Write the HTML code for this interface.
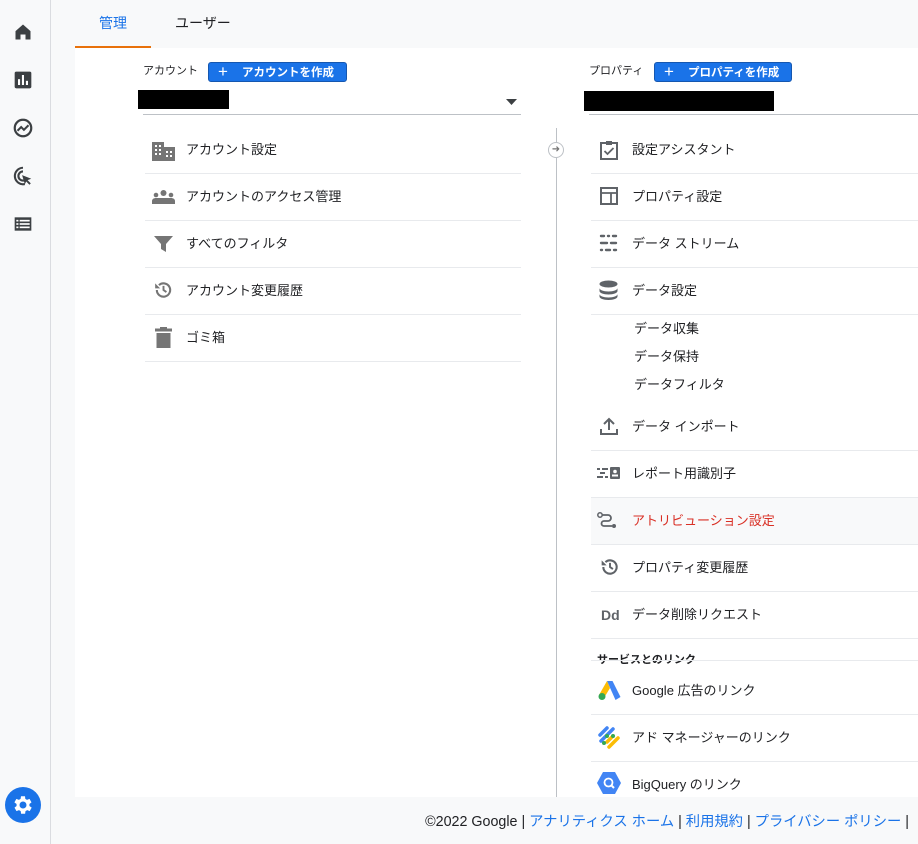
<!DOCTYPE html>
<html><head><meta charset="utf-8"><style>
*{margin:0;padding:0;box-sizing:border-box}
body{width:918px;height:844px;overflow:hidden;background:#f8f9fa;font-family:"Liberation Sans","Noto Sans CJK JP",sans-serif;color:#202124;position:relative}
.abs{position:absolute}
.side{left:0;top:0;width:51px;height:844px;border-right:1px solid #dadce0;background:#f8f9fa}
.main{left:75px;top:48px;width:843px;height:749px;background:#fff}
.t{position:absolute;font-size:13px;white-space:nowrap;line-height:16px}
.sep{position:absolute;height:1px;background:#e8eaed}
.btn{position:absolute;height:20px;background:#1a73e8;border-radius:3px;color:#fff;font-size:11.5px;font-weight:bold;line-height:20px;border:1px solid #1557b0}
.ic{position:absolute}
.r{margin-top:1px}
</style></head><body>
<div class="abs side"></div>
<svg class="ic" style="left:13px;top:22px" width="20" height="20" viewBox="0 0 24 24"><path d="M3 11 12 3l9 8v10h-6v-6H9v6H3z" fill="#3c4043"/></svg>
<svg class="ic" style="left:13px;top:70px" width="20" height="20" viewBox="0 0 24 24"><rect x="2" y="2" width="20" height="20" rx="2" fill="#3c4043"/><rect x="6" y="11" width="2.5" height="7" fill="#fff"/><rect x="10.7" y="6" width="2.5" height="12" fill="#fff"/><rect x="15.5" y="13" width="2.5" height="5" fill="#fff"/></svg>
<svg class="ic" style="left:12px;top:117px" width="22" height="22" viewBox="0 0 24 24"><circle cx="12" cy="12" r="9" fill="none" stroke="#3c4043" stroke-width="2.4"/><path d="M6 15l4-4 3 3 5-5" fill="none" stroke="#3c4043" stroke-width="2.2"/></svg>
<svg class="ic" style="left:12px;top:165px" width="22" height="22" viewBox="0 0 24 24"><path d="M12 3a9 9 0 1 0 2 17.8M12 7a5 5 0 1 0 1 9.9" fill="none" stroke="#3c4043" stroke-width="2.3"/><path d="M11 11l10 4-4 1.5 3.5 3.5-1.5 1.5-3.5-3.5L14 21z" fill="#3c4043"/></svg>
<svg class="ic" style="left:13px;top:214px" width="20" height="20" viewBox="0 0 24 24"><rect x="2" y="4" width="20" height="16" fill="#3c4043"/><g fill="#fff"><rect x="4" y="7" width="2.5" height="2"/><rect x="8" y="7" width="12" height="2"/><rect x="4" y="11" width="2.5" height="2"/><rect x="8" y="11" width="12" height="2"/><rect x="4" y="15" width="2.5" height="2"/><rect x="8" y="15" width="12" height="2"/></g></svg>
<svg class="ic" style="left:5px;top:787px" width="36" height="36" viewBox="0 0 36 36"><circle cx="18" cy="18" r="18" fill="#1a73e8"/><g transform="translate(6 6)"><path fill="#fff" d="M19.4 13a7.5 7.5 0 0 0 0-2l2.1-1.6-2-3.5-2.5 1a7.3 7.3 0 0 0-1.7-1L15 3.2h-4l-.4 2.7a7.3 7.3 0 0 0-1.7 1l-2.5-1-2 3.5L6.6 11a7.5 7.5 0 0 0 0 2l-2.1 1.6 2 3.5 2.5-1c.5.4 1.1.7 1.7 1l.4 2.7h4l.4-2.7c.6-.3 1.2-.6 1.7-1l2.5 1 2-3.5zM13 15.5a3.5 3.5 0 1 1 0-7 3.5 3.5 0 0 1 0 7z" transform="translate(-1 0)"/></g></svg>

<div class="t" style="left:99px;top:15px;font-size:14px;color:#1a73e8">管理</div>
<div class="t" style="left:175px;top:15px;font-size:14px;color:#202124">ユーザー</div>
<div class="abs" style="left:75px;top:46px;width:76px;height:2px;background:#e8710a"></div>

<div class="abs main"></div>

<div class="t" style="left:143px;top:63px;font-size:11px">アカウント</div>
<div class="btn" style="left:208px;top:62px;width:139px"><span style="font-size:17px;font-weight:normal;position:absolute;left:9px;top:-1px">+</span><span style="position:absolute;left:33px">アカウントを作成</span></div>
<div class="abs" style="left:138px;top:90px;width:91px;height:19px;background:#000"></div>
<svg class="ic" style="left:506px;top:99px" width="11" height="6"><path d="M0 0h11L5.5 6z" fill="#3c4043"/></svg>
<div class="abs" style="left:143px;top:114px;width:378px;height:1px;background:#bdc1c6"></div>

<svg class="ic" style="left:152px;top:142px" width="23" height="19" viewBox="0 0 23 19"><path d="M0 0h12v5h11v14H0z" fill="#757575"/><g fill="#fff"><rect x="3" y="3" width="2" height="2"/><rect x="7" y="3" width="2" height="2"/><rect x="3" y="7" width="2" height="2"/><rect x="7" y="7" width="2" height="2"/><rect x="3" y="11" width="2" height="2"/><rect x="7" y="11" width="2" height="2"/><rect x="14" y="9" width="2" height="2"/><rect x="18" y="9" width="2" height="2"/><rect x="14" y="13" width="2" height="2"/><rect x="18" y="13" width="2" height="2"/></g></svg>
<div class="t" style="left:186px;top:142px">アカウント設定</div>
<div class="sep" style="left:145px;top:173px;width:376px"></div>
<svg class="ic" style="left:152px;top:190px" width="23" height="14" viewBox="0 0 23 14"><circle cx="11.5" cy="3" r="3" fill="#757575"/><circle cx="4" cy="5" r="2.3" fill="#757575"/><circle cx="19" cy="5" r="2.3" fill="#757575"/><path d="M0 14v-3c0-2 2-3 4-3h15c2 0 4 1 4 3v3z" fill="#757575"/></svg>
<div class="t" style="left:186px;top:189px">アカウントのアクセス管理</div>
<div class="sep" style="left:145px;top:220px;width:376px"></div>
<svg class="ic" style="left:154px;top:236px" width="19" height="16" viewBox="0 0 19 16"><path d="M0 0h19l-7 8v8l-5-3V8z" fill="#757575"/></svg>
<div class="t" style="left:186px;top:236px">すべてのフィルタ</div>
<div class="sep" style="left:145px;top:267px;width:376px"></div>
<svg class="ic" style="left:153px;top:280px" width="21" height="20" viewBox="0 0 24 24"><path d="M4 12a8 8 0 1 0 2.5-5.8" fill="none" stroke="#757575" stroke-width="2.5"/><path d="M2 4v6h6z" fill="#757575"/><path d="M12 7v5l3.5 2.5" fill="none" stroke="#757575" stroke-width="2.3"/></svg>
<div class="t" style="left:186px;top:283px">アカウント変更履歴</div>
<div class="sep" style="left:145px;top:314px;width:376px"></div>
<svg class="ic" style="left:155px;top:327px" width="17" height="21" viewBox="0 0 17 21"><rect x="0" y="1.5" width="17" height="3" fill="#757575"/><rect x="5" y="0" width="7" height="2" fill="#757575"/><rect x="1.5" y="6" width="14" height="15" fill="#757575"/></svg>
<div class="t" style="left:186px;top:330px">ゴミ箱</div>
<div class="sep" style="left:145px;top:361px;width:376px"></div>

<div class="abs" style="left:556px;top:128px;width:1px;height:669px;background:#bdc1c6"></div>
<div class="abs" style="left:548px;top:142px;width:16px;height:16px;border-radius:50%;border:1px solid #bdc1c6;background:#fff;font-size:10px;color:#757575;text-align:center;line-height:14px">➜</div>

<div class="t" style="left:589px;top:63px;font-size:11px">プロパティ</div>
<div class="btn" style="left:654px;top:62px;width:138px"><span style="font-size:17px;font-weight:normal;position:absolute;left:9px;top:-1px">+</span><span style="position:absolute;left:33px">プロパティを作成</span></div>
<div class="abs" style="left:584px;top:91px;width:190px;height:20px;background:#000"></div>
<div class="abs" style="left:589px;top:114px;width:329px;height:1px;background:#bdc1c6"></div>

<svg class="ic" style="left:600px;top:140px" width="18" height="20" viewBox="0 0 18 20"><rect x="1" y="3" width="16" height="16" fill="none" stroke="#5f6368" stroke-width="2"/><rect x="6" y="1" width="6" height="4" fill="#5f6368"/><path d="M4.5 11l3 3 6-6" fill="none" stroke="#5f6368" stroke-width="1.8"/></svg>
<div class="t" style="left:632px;top:142px">設定アシスタント</div>
<div class="sep" style="left:591px;top:173px;width:327px"></div>
<svg class="ic" style="left:600px;top:187px" width="18" height="18" viewBox="0 0 18 18"><rect x="1" y="1" width="16" height="16" fill="none" stroke="#5f6368" stroke-width="2"/><path d="M1 6h16M11 6v11" stroke="#5f6368" stroke-width="1.8"/></svg>
<div class="t" style="left:632px;top:189px">プロパティ設定</div>
<div class="sep" style="left:591px;top:220px;width:327px"></div>
<svg class="ic" style="left:599px;top:234px" width="19" height="18" viewBox="0 0 19 18"><g stroke="#5f6368" stroke-width="2.4" stroke-linecap="round"><path d="M2 2h3M9 2h1M14 2h3M2 9h6M12 9h5M2 16h1M7 16h4M15 16h2"/></g></svg>
<div class="t" style="left:632px;top:236px">データ ストリーム</div>
<div class="sep" style="left:591px;top:267px;width:327px"></div>
<svg class="ic" style="left:599px;top:280px" width="19" height="20" viewBox="0 0 19 20"><ellipse cx="9.5" cy="4" rx="9" ry="3.5" fill="#5f6368"/><path d="M0.5 8c0 2 4 3.5 9 3.5s9-1.5 9-3.5v3c0 2-4 3.5-9 3.5s-9-1.5-9-3.5z" fill="#5f6368"/><path d="M0.5 14c0 2 4 3.5 9 3.5s9-1.5 9-3.5v2.5c0 2-4 3.5-9 3.5s-9-1.5-9-3.5z" fill="#5f6368"/></svg>
<div class="t" style="left:632px;top:283px">データ設定</div>
<div class="sep" style="left:591px;top:314px;width:327px"></div>
<div class="t" style="left:634px;top:321px">データ収集</div>
<div class="t" style="left:634px;top:349px">データ保持</div>
<div class="t" style="left:634px;top:377px">データフィルタ</div>
<svg class="ic" style="left:600px;top:417px" width="18" height="18" viewBox="0 0 18 18"><path d="M9 13V2M4 7l5-5 5 5" fill="none" stroke="#5f6368" stroke-width="2"/><path d="M1 12v5h16v-5" fill="none" stroke="#5f6368" stroke-width="2"/></svg>
<div class="t" style="left:632px;top:419px">データ インポート</div>
<div class="sep" style="left:591px;top:450px;width:327px"></div>
<svg class="ic" style="left:597px;top:466px" width="23" height="14" viewBox="0 0 23 14"><g fill="#5f6368"><rect x="0" y="2" width="3" height="2"/><rect x="5" y="2" width="6" height="2"/><rect x="0" y="10" width="6" height="2"/><rect x="8" y="10" width="3" height="2"/><rect x="3" y="6" width="5" height="2"/><rect x="13" y="1" width="10" height="12" rx="1"/></g><circle cx="18" cy="5.5" r="1.8" fill="#fff"/><rect x="15" y="8.5" width="6" height="2" fill="#fff"/></svg>
<div class="t" style="left:632px;top:466px">レポート用識別子</div>
<div class="abs" style="left:591px;top:497px;width:327px;height:47px;background:#f8f9fa;border-top:1px solid #e8eaed"></div>
<svg class="ic" style="left:597px;top:512px" width="20" height="17" viewBox="0 0 20 17"><circle cx="3" cy="3" r="2.2" fill="none" stroke="#5f6368" stroke-width="1.5"/><circle cx="17" cy="14" r="2" fill="#5f6368"/><path d="M5 3h6a3 3 0 0 1 0 6H7a2.5 2.5 0 0 0 0 5h8" fill="none" stroke="#5f6368" stroke-width="1.8"/></svg>
<div class="t" style="left:632px;top:513px;color:#d93025">アトリビューション設定</div>
<div class="sep" style="left:591px;top:544px;width:327px"></div>
<svg class="ic" style="left:600px;top:557px" width="20" height="20" viewBox="0 0 24 24"><path d="M4 12a8 8 0 1 0 2.5-5.8" fill="none" stroke="#5f6368" stroke-width="2.5"/><path d="M2 4v6h6z" fill="#5f6368"/><path d="M12 7v5l3.5 2.5" fill="none" stroke="#5f6368" stroke-width="2.3"/></svg>
<div class="t" style="left:632px;top:560px">プロパティ変更履歴</div>
<div class="sep" style="left:591px;top:591px;width:327px"></div>
<div class="t" style="left:601px;top:607px;font-weight:bold;color:#5f6368;font-size:14px">Dd</div>
<div class="t" style="left:632px;top:607px">データ削除リクエスト</div>
<div class="sep" style="left:591px;top:638px;width:327px"></div>
<div class="t" style="left:597px;top:652px;font-size:11px;font-weight:bold">サービスとのリンク</div>
<div class="sep" style="left:591px;top:660px;width:327px"></div>
<svg class="ic" style="left:598px;top:680px" width="23" height="21" viewBox="0 0 23 21"><path d="M9 1l5.5 0 8 16-5 3z" fill="#4285f4"/><path d="M9 1l-8 14 5 3 6-10z" fill="#fbbc04"/><circle cx="4" cy="16.5" r="3.5" fill="#34a853"/></svg>
<div class="t" style="left:632px;top:683px">Google 広告のリンク</div>
<div class="sep" style="left:591px;top:714px;width:327px"></div>
<svg class="ic" style="left:597px;top:726px" width="24" height="24" viewBox="0 0 24 24"><g stroke-linecap="round" stroke-width="3.5"><path d="M3 9l7-7" stroke="#4285f4"/><path d="M4 15l12-12" stroke="#4285f4"/><path d="M10 16l6-6" stroke="#fbbc04"/><path d="M12 21l9-9" stroke="#fbbc04"/></g><circle cx="10" cy="10" r="2" fill="#34a853"/><circle cx="7" cy="17" r="2" fill="#34a853"/><circle cx="16" cy="10" r="2" fill="#34a853"/></svg>
<div class="t" style="left:632px;top:730px">アド マネージャーのリンク</div>
<div class="sep" style="left:591px;top:761px;width:327px"></div>
<svg class="ic" style="left:597px;top:772px" width="24" height="22" viewBox="0 0 24 22"><path d="M6 0h12l6 11-6 11H6L0 11z" fill="#4285f4"/><circle cx="11.5" cy="10.5" r="4" fill="none" stroke="#fff" stroke-width="1.8"/><path d="M14 13l3 3" stroke="#fff" stroke-width="2"/></svg>
<div class="t" style="left:632px;top:777px">BigQuery のリンク</div>

<div class="t" style="right:9px;top:814px;font-size:14.3px;color:#202124">©2022 Google | <span style="color:#1a73e8">アナリティクス ホーム</span> | <span style="color:#1a73e8">利用規約</span> | <span style="color:#1a73e8">プライバシー ポリシー</span> |</div>
</body></html>
